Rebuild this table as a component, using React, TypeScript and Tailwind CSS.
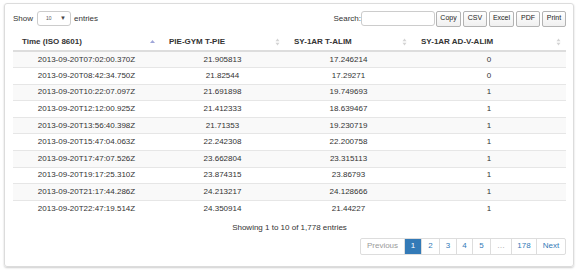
import type { JSX } from 'react'

const rows: [string, string, string, string][] = [
  ['2013-09-20T07:02:00.370Z', '21.905813', '17.246214', '0'],
  ['2013-09-20T08:42:34.750Z', '21.82544', '17.29271', '0'],
  ['2013-09-20T10:22:07.097Z', '21.691898', '19.749693', '1'],
  ['2013-09-20T12:12:00.925Z', '21.412333', '18.639467', '1'],
  ['2013-09-20T13:56:40.398Z', '21.71353', '19.230719', '1'],
  ['2013-09-20T15:47:04.063Z', '22.242308', '22.200758', '1'],
  ['2013-09-20T17:47:07.526Z', '23.662804', '23.315113', '1'],
  ['2013-09-20T19:17:25.310Z', '23.874315', '23.86793', '1'],
  ['2013-09-20T21:17:44.286Z', '24.213217', '24.128666', '1'],
  ['2013-09-20T22:47:19.514Z', '24.350914', '21.44227', '1'],
]

const headers = ['Time (ISO 8601)', 'PIE-GYM T-PIE', 'SY-1AR T-ALIM', 'SY-1AR AD-V-ALIM']
const widths = ['w-[147px]', 'w-[125px]', 'w-[127px]', 'w-[154px]']

function SortIcon({ active }: { active: boolean }): JSX.Element {
  if (active) {
    return (
      <svg width="5" height="8" viewBox="0 0 5 8" className="shrink-0">
        <path d="M2.5 2 L5 5 L0 5 Z" fill="#9fa6d8" />
      </svg>
    )
  }
  return (
    <svg width="5" height="8" viewBox="0 0 5 8" className="shrink-0">
      <path d="M2.5 0.5 L4.5 3.2 L0.5 3.2 Z" fill="#d4d4d4" />
      <path d="M2.5 7.5 L4.5 4.8 L0.5 4.8 Z" fill="#d4d4d4" />
    </svg>
  )
}

const pages = ['Previous', '1', '2', '3', '4', '5', '…', '178', 'Next']
const pageWidths = ['w-[43px]', 'w-[17px]', 'w-[18px]', 'w-[17px]', 'w-[16px]', 'w-[18px]', 'w-[21px]', 'w-[25px]', 'w-[29px]']

export default function App(): JSX.Element {
  return (
    <div className="w-[582px] h-[271px] bg-white pl-[4px] pt-[3px] text-[#333] font-['Liberation_Sans',Arial,sans-serif]">
      <div className="w-[570px] h-[264px] border border-[#dcdcdc] rounded-[3px] shadow-[0_1px_2px_rgba(0,0,0,0.2)] pl-[8px] pr-[7px] pt-[6px]">
        <div className="flex items-center h-[17px] text-[8px]">
          <span>Show</span>
          <div className="ml-[4px] w-[34px] h-[15px] border border-[#ccc] rounded-[3px] flex items-center justify-between px-[8px] pr-[4px]">
            <span className="text-[5px] text-[#555]">10</span>
            <span className="text-[6px] text-[#444]">▼</span>
          </div>
          <span className="ml-[3px]">entries</span>
          <div className="ml-auto flex items-center">
            <span>Search:</span>
            <div className="w-[74px] h-[15px] border border-[#ccc] rounded-[3px]" />
            <div className="flex ml-[1px] gap-[2px]">
              {['Copy', 'CSV', 'Excel', 'PDF', 'Print'].map((b, i) => (
                <div
                  key={b}
                  className={`${['w-[25px]', 'w-[24px]', 'w-[25px]', 'w-[24px]', 'w-[24px]'][i]} h-[16px] border border-[#b3b3b3] rounded-[2px] bg-gradient-to-b from-white to-[#f0f0f0] flex items-center justify-center text-[7px] text-[#222]`}
                >
                  {b}
                </div>
              ))}
            </div>
          </div>
        </div>

        <table className="mt-[6px] w-[553px] table-fixed border-collapse text-[8px]">
          <thead>
            <tr className="h-[18px] border-b-2 border-[#ddd]">
              {headers.map((h, i) => (
                <th key={h} className={`${widths[i]} p-0 font-bold text-left`}>
                  <div className="flex items-center pl-[9px] pr-[5px]">
                    <span>{h}</span>
                    <span className="ml-auto">
                      <SortIcon active={i === 0} />
                    </span>
                  </div>
                </th>
              ))}
            </tr>
          </thead>
          <tbody>
            {rows.map((r, ri) => (
              <tr key={r[0]} className={`h-[16.6px] border-t border-[#e6e6e6] ${ri % 2 === 0 ? 'bg-[#f9f9f9]' : 'bg-white'}`}>
                {r.map((c, ci) => (
                  <td key={ci} className="p-0 text-center leading-none">
                    {c}
                  </td>
                ))}
              </tr>
            ))}
          </tbody>
        </table>

        <div className="mt-[6px] text-center text-[8px] leading-[10px]">Showing 1 to 10 of 1,778 entries</div>

        <div className="mt-[5px] flex justify-end">
          <div className="flex h-[17px] border border-[#ddd] rounded-[2px] overflow-hidden text-[8px]">
            {pages.map((p, i) => (
              <div
                key={p}
                className={`${pageWidths[i]} flex items-center justify-center ${i > 0 ? 'border-l border-[#ddd]' : ''} ${
                  p === '1' ? 'bg-[#337ab7] text-white border-[#337ab7]' : p === 'Previous' || p === '…' ? 'text-[#9a9a9a]' : 'text-[#337ab7]'
                }`}
              >
                {p}
              </div>
            ))}
          </div>
        </div>
      </div>
    </div>
  )
}
